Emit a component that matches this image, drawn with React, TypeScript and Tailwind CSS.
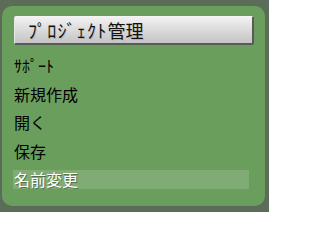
const MENU = ['ｻﾎﾟｰﾄ', '新規作成', '開く', '保存', '名前変更']

export default function App() {
  return (
    <div
      className="w-[269px] h-[212px] bg-[#5b6c59] pt-[6px] pl-[2px] pr-[4px]"
      style={{ fontFamily: '"Noto Sans CJK JP", "Noto Sans", sans-serif' }}
    >
      <div className="h-[200px] rounded-[10px] bg-[#6a9e5d] pt-[10px] pl-[12px] pr-[11px]">
        {/* title button */}
        <div className="h-[29px] w-[240px] rounded-[2px] border border-t-[#f4f4f4] border-l-[#e6e6e6] border-b-2 border-r-2 border-b-[#5a5a5a] border-r-[#5a5a5a] bg-gradient-to-b from-[#f2f2f2] to-[#c4c4c4] flex items-center pl-[13px] text-[18px] leading-none text-[#111] [text-shadow:1px_1px_0_rgba(0,0,0,0.12)]">
          <span className="tracking-[1.25px]">ﾌﾟﾛｼﾞｪｸﾄ</span>
          <span>管理</span>
        </div>

        <div className="mt-[10.5px] flex flex-col gap-[9.5px] -ml-[1px]">
          {MENU.map((item, i) => (
            <div
              key={item}
              className={`h-[19px] w-[236px] flex items-center pl-[1px] text-[16px] leading-none ${
                i === MENU.length - 1
                  ? 'bg-[#80ab75] text-white [text-shadow:1px_1px_0_rgba(0,0,0,0.35)]'
                  : 'text-black'
              }`}
            >
              {item}
            </div>
          ))}
        </div>
      </div>
    </div>
  )
}
